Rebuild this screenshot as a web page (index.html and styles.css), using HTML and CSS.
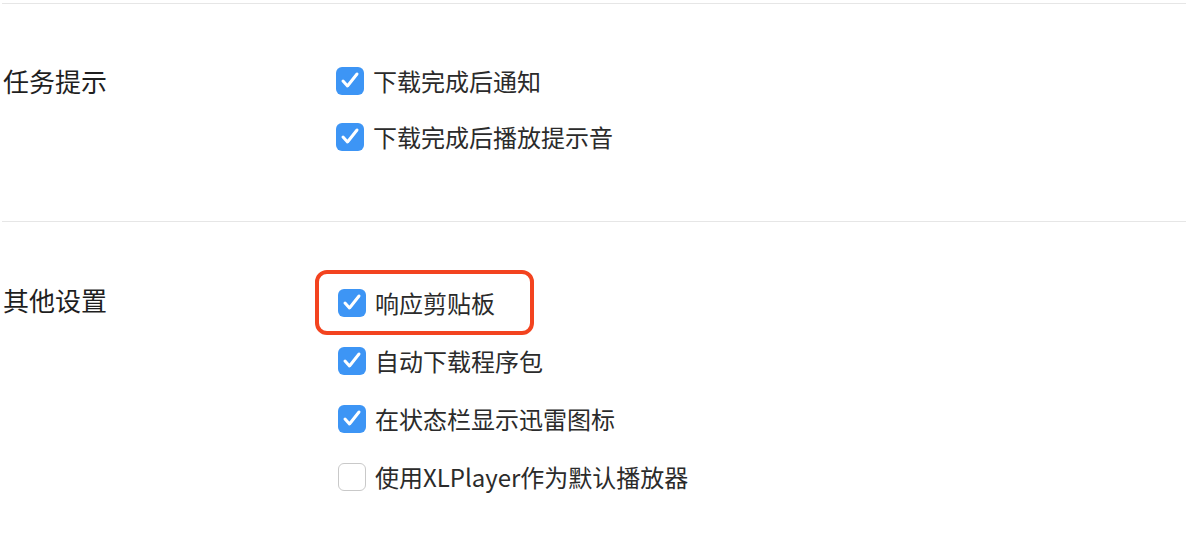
FILE: index.html
```html
<!DOCTYPE html>
<html lang="zh-CN">
<head>
<meta charset="utf-8">
<title>设置</title>
<link rel="stylesheet" href="styles.css">
</head>
<body>
<div class="page">
  <section class="section section-task">
    <div class="label">任务提示</div>
    <ul class="options">
      <li class="option"><span class="box checked"><svg viewBox="0 0 28 28"><polyline points="7,14 11.5,19 21,7"/></svg></span><span class="text">下载完成后通知</span></li>
      <li class="option"><span class="box checked"><svg viewBox="0 0 28 28"><polyline points="7,14 11.5,19 21,7"/></svg></span><span class="text">下载完成后播放提示音</span></li>
    </ul>
  </section>
  <section class="section section-other">
    <div class="label">其他设置</div>
    <ul class="options">
      <li class="option highlight"><span class="box checked"><svg viewBox="0 0 28 28"><polyline points="7,14 11.5,19 21,7"/></svg></span><span class="text">响应剪贴板</span></li>
      <li class="option"><span class="box checked"><svg viewBox="0 0 28 28"><polyline points="7,14 11.5,19 21,7"/></svg></span><span class="text">自动下载程序包</span></li>
      <li class="option"><span class="box checked"><svg viewBox="0 0 28 28"><polyline points="7,14 11.5,19 21,7"/></svg></span><span class="text">在状态栏显示迅雷图标</span></li>
      <li class="option"><span class="box"></span><span class="text">使用XLPlayer作为默认播放器</span></li>
    </ul>
  </section>
</div>
</body>
</html>
```
FILE: styles.css
```css
html, body {
  margin: 0;
  padding: 0;
  background: #ffffff;
}
body {
  font-family: "Noto Sans CJK SC", "Noto Sans", sans-serif;
  color: #333333;
}
.page {
  padding-top: 3px;
}
.section {
  display: flex;
  margin-left: 2px;
  border-top: 1px solid #e6e6e6;
}
.section-task {
  padding-top: 63px;
  padding-bottom: 70px;
}
.section-other {
  padding-top: 67px;
  padding-bottom: 40px;
}
.label {
  width: 334px;
  flex: none;
  padding-left: 1px;
  box-sizing: border-box;
  font-size: 26px;
  line-height: 28px;
  color: #1f1f1f;
}
.section-other .label {
  margin-top: -3px;
}
.options {
  list-style: none;
  margin: 0;
  padding: 0;
  display: flex;
  flex-direction: column;
  gap: 28px;
}
.section-other .options {
  padding-left: 2px;
  gap: 30px;
}
.option {
  display: flex;
  align-items: center;
  gap: 9px;
  height: 28px;
  position: relative;
}
.box {
  width: 28px;
  height: 28px;
  box-sizing: border-box;
  border-radius: 6px;
  border: 1px solid #c9c9c9;
  background: #ffffff;
  flex: none;
  display: flex;
}
.box.checked {
  border: none;
  background: #3d95f5;
}
.box svg {
  width: 28px;
  height: 28px;
}
.box polyline {
  fill: none;
  stroke: #ffffff;
  stroke-width: 3;
  stroke-linecap: round;
  stroke-linejoin: round;
}
.text {
  font-size: 24px;
  line-height: 28px;
  color: #2b2b2b;
}
.highlight::before {
  content: "";
  position: absolute;
  left: -23px;
  top: -19px;
  width: 219px;
  height: 65px;
  box-sizing: border-box;
  border: 4px solid #f3431f;
  border-radius: 12px;
}
```
